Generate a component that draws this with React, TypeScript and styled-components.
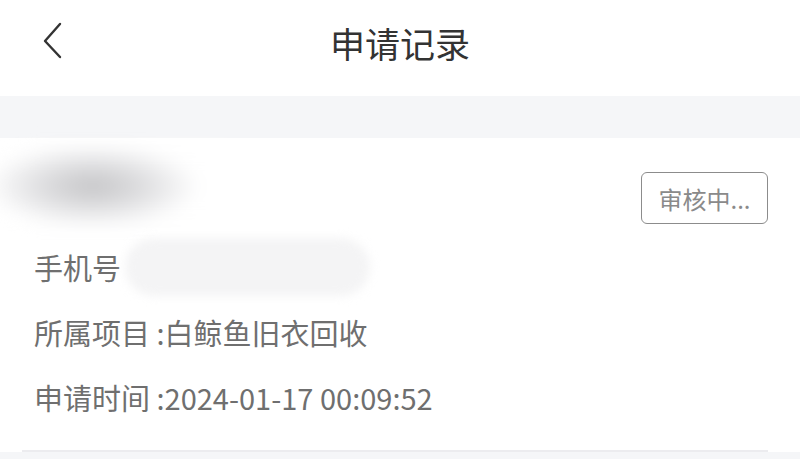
import React from 'react'
import styled, { createGlobalStyle } from "styled-components";

const GlobalStyle = createGlobalStyle`
    html, body {
        margin: 0;
        padding: 0;
        background: #f5f6f8;
        font-family: "Noto Sans CJK SC", "Noto Sans", sans-serif;
    }
`;

const Page = styled.div`
    width: 800px;
    min-height: 459px;
    background: #f5f6f8;
    overflow: hidden;
`;

const Header = styled.div`
    height: 96px;
    background: #fff;
    display: flex;
    align-items: center;
    justify-content: center;
    position: relative;
`;

const BackButton = styled.div`
    position: absolute;
    left: 36px;
    top: 18px;
    width: 32px;
    height: 44px;
    display: flex;
    align-items: center;
    justify-content: center;
`;

const Title = styled.div`
    font-size: 35px;
    color: #333;
    margin-top: -12px;
`;

const Band = styled.div`
    height: 42px;
    background: #f5f6f8;
`;

const Card = styled.div`
    background: #fff;
    padding: 0 32px 0 34px;
`;

const NameRow = styled.div`
    height: 96px;
    display: flex;
    justify-content: space-between;
    align-items: flex-start;
`;

const NameBlur = styled.div`
    margin-left: -44px;
    margin-top: 10px;
    width: 270px;
    height: 76px;
    border-radius: 38px;
    background: radial-gradient(ellipse 40% 55% at 38% 50%, #c4c4c6 0%, #dcdcde 45%, #f2f2f3 80%, #fff 100%);
    filter: blur(9px);
`;

const Tag = styled.div`
    margin-top: 34px;
    width: 127px;
    height: 52px;
    box-sizing: border-box;
    border: 1.5px solid #8c8c8c;
    border-radius: 6px;
    display: flex;
    align-items: center;
    justify-content: center;
    font-size: 24px;
    color: #8a8a8a;
`;

const InfoRow = styled.div`
    height: 65px;
    display: flex;
    align-items: center;
    font-size: 29px;
    color: #6f6f6f;
`;

const PhoneBlur = styled.div`
    margin-left: 4px;
    width: 245px;
    height: 58px;
    border-radius: 29px;
    background: #f4f4f5;
    filter: blur(5px);
`;

const Footer = styled.div`
    height: 21px;
`;

const Divider = styled.div`
    height: 2px;
    margin: 0 0 0 -12px;
    background: #ececef;
`;

export default function App() {
    return (
        <Page>
            <GlobalStyle />
            <Header>
                <BackButton>
                    <svg width="22" height="38" viewBox="0 0 22 38">
                        <path d="M19 3 L4 20 L19 36" fill="none" stroke="#333" strokeWidth="2.4" strokeLinecap="round" strokeLinejoin="round" />
                    </svg>
                </BackButton>
                <Title>申请记录</Title>
            </Header>
            <Band />
            <Card>
                <NameRow>
                    <NameBlur />
                    <Tag>审核中...</Tag>
                </NameRow>
                <InfoRow>
                    手机号
                    <PhoneBlur />
                </InfoRow>
                <InfoRow>所属项目 :白鲸鱼旧衣回收</InfoRow>
                <InfoRow>申请时间 :2024-01-17 00:09:52</InfoRow>
                <Footer />
                <Divider />
            </Card>
        </Page>
    )
}
